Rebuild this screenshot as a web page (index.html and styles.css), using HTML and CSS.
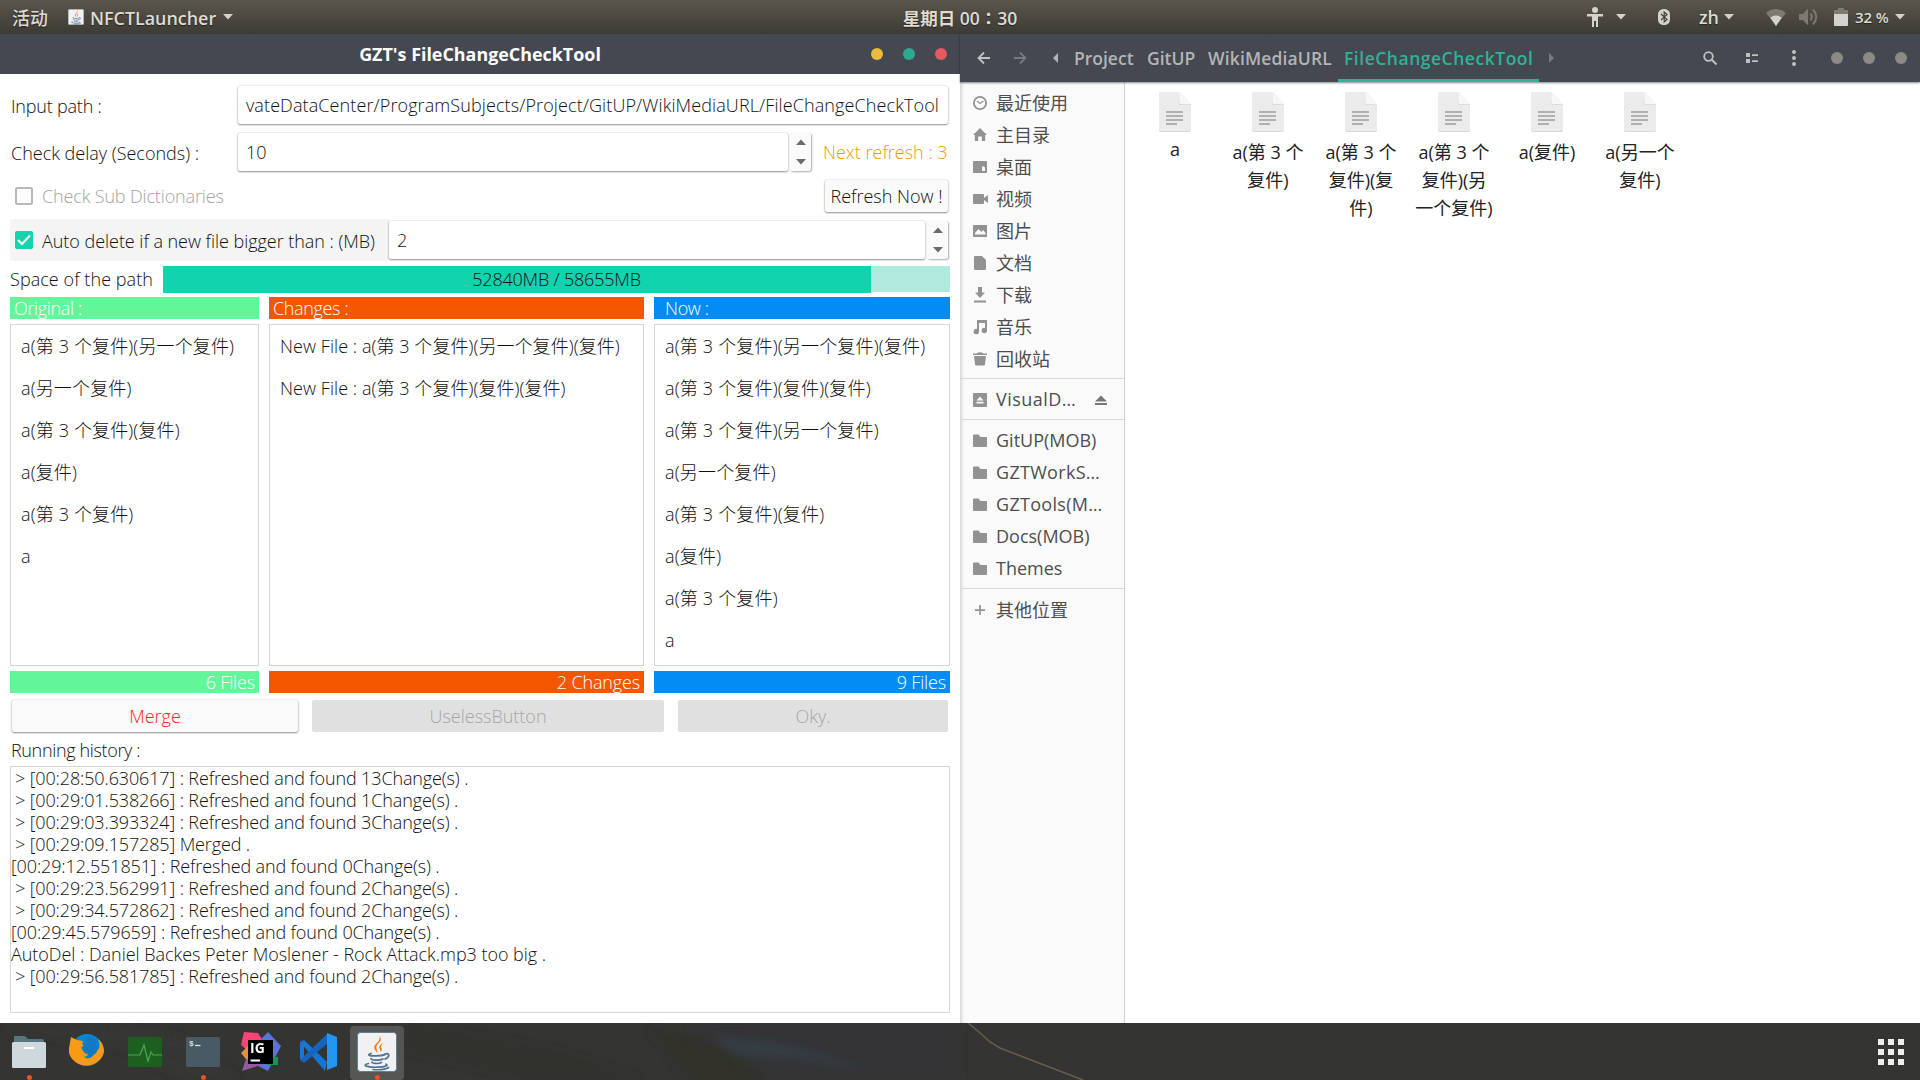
FILE: index.html
```html
<!DOCTYPE html>
<html lang="zh-CN">
<head>
<meta charset="utf-8">
<title>GZT's FileChangeCheckTool</title>
<link rel="stylesheet" href="styles.css">
</head>
<body>
<svg width="0" height="0" class="defs" aria-hidden="true">
  <symbol id="caret" viewBox="0 0 10 6"><path d="M0 0h10L5 5.5z"/></symbol>
  <symbol id="folder" viewBox="0 0 16 16"><path d="M1 2.5Q1 1.500 2 1.500H6.500L8.500 4H14Q15 4 15 5V13Q15 14 14 14H2Q1 14 1 13z"/></symbol>
  <symbol id="java" viewBox="0 0 40 40">
    <rect x=".5" y=".5" width="39" height="39" rx="3" fill="#f1f1f1" stroke="#5f7f98"/>
    <path d="M20.500 21c-2-3-5-5-2-8.500 2.500-2.800 5-4.500 4-8.500 3.500 4-.5 6.500-2.500 9-1.800 2.500.5 4.500.5 8zM23 20c1.500-2.200-1.500-3.500-.5-6 .8-1.700 2.500-2.400 4-3-3.500 3-2.500 4-1.800 5.500.6 1.500-.2 2.600-1.700 3.500z" fill="#ec7a1c"/>
    <g fill="none" stroke="#4d7393" stroke-width="1.700" stroke-linecap="round"><path d="M14 21.500c-5 1.800-1 2.300 5 2.300 4 0 7-.4 9-1.200"/><path d="M28 22c5-1.500 5 3 0 5"/><path d="M14 26.500c0 2 9 2.200 12 .5M15 30c0 1.700 6.500 2 9.500.5"/><path d="M11.500 31.500c-9 2.300 2 4 9.500 3.700 7-.2 11-1.700 8-3M16 37.500c7 .6 13-.2 15.500-2"/></g>
  </symbol>
  <symbol id="doc" viewBox="0 0 32 40">
    <path d="M2 0H21L32 12V38Q32 40 30 40H2Q0 40 0 38V2Q0 0 2 0z" fill="#ebebeb"/>
    <path d="M0 38Q0 40 2 40H30Q32 40 32 38V37Q32 39 30 39H2Q0 39 0 37z" fill="#d9d9d9"/>
    <path d="M20.500 0V10.500Q20.500 12 22 12.500H32V13H22Q20 13 20 11z" fill="#cfcfcf"/><path d="M20.500 0L32 12H22Q20.500 12 20.500 10.500z" fill="#f7f7f7"/>
    <path d="M7 19h17v2H7zM7 23h17v2H7zM7 27h17v2H7zM7 31h11v2H7z" fill="#b0b0b0"/>
  </symbol>
</svg>

<header class="topbar">
  <div class="topbar-left">
    <span class="activities">活动</span>
    <svg class="app-icon" viewBox="0 0 40 40"><use href="#java"/></svg>
    <span class="app-name">NFCTLauncher</span>
    <svg class="caret"><use href="#caret"/></svg>
  </div>
  <div class="clock">星期日 00<span class="colon" lang="zh-TW">：</span>30</div>
  <div class="tray">
    <svg class="tray-access" width="18" height="20" viewBox="0 0 18 20"><circle cx="9" cy="3" r="3"/><path d="M1 7h16v2.500h-5V20h-2v-6H8v6H6V9.500H1z"/></svg>
    <svg class="caret"><use href="#caret"/></svg>
    <svg class="tray-bt" width="12" height="16" viewBox="0 0 12 16"><rect width="12" height="16" rx="5.500"/><path d="M3 5l6 5.500L6.200 13V3L9 5.500 3 11" fill="none" stroke="#45433c" stroke-width="1.200"/></svg>
    <span class="lang">zh</span>
    <svg class="caret"><use href="#caret"/></svg>
    <svg class="tray-wifi" width="20" height="17" viewBox="0 0 20 17"><path d="M0 4Q10-4 20 4L10 17z" opacity=".35"/><path d="M4.300 8.500Q10 4.500 15.700 8.500L10 17z"/></svg>
    <svg class="tray-vol" width="20" height="18" viewBox="0 0 20 18"><path d="M0 6h4l5-5.500v17L4 12H0z"/><path d="M11.500 5.500Q14 9 11.500 12.500M14 1.500Q20.500 9 14 16.500" fill="none" stroke="#7b7972" stroke-width="2"/></svg>
    <svg class="tray-bat" width="14" height="18" viewBox="0 0 14 18"><path d="M4 0h6v2h3q1 0 1 1v4H0V3q0-1 1-1h3z" opacity=".35"/><path d="M0 6h14v11q0 1-1 1H1q-1 0-1-1z"/></svg>
    <span class="percent">32 %</span>
    <svg class="caret"><use href="#caret"/></svg>
  </div>
</header>

<main class="desktop">
  <section class="tool">
    <div class="tool-title">
      <h1>GZT's FileChangeCheckTool</h1>
      <div class="buttons"><i class="min"></i><i class="max"></i><i class="close"></i></div>
    </div>
    <div class="form">
      <div class="row row-path">
        <label>Input path :</label>
        <div class="input path">vateDataCenter/ProgramSubjects/Project/GitUP/WikiMediaURL/FileChangeCheckTool</div>
      </div>
      <div class="row row-delay">
        <label>Check delay (Seconds) :</label>
        <div class="input">10</div>
        <div class="spin"><svg class="caret up"><use href="#caret"/></svg><svg class="caret"><use href="#caret"/></svg></div>
        <span class="next">Next refresh : 3</span>
      </div>
      <div class="row row-sub">
        <span class="check"></span>
        <span class="muted">Check Sub Dictionaries</span>
        <button class="btn refresh">Refresh Now !</button>
      </div>
      <div class="row row-auto">
        <div class="auto">
          <span class="check on"><svg width="18" height="18" viewBox="0 0 18 18"><path d="M3 9l4 4 8-8.500" fill="none" stroke="#fff" stroke-width="2"/></svg></span>
          <span class="auto-text">Auto delete if a new file bigger than : (MB)</span>
        </div>
        <div class="input">2</div>
        <div class="spin"><svg class="caret up"><use href="#caret"/></svg><svg class="caret"><use href="#caret"/></svg></div>
      </div>
      <div class="row row-space">
        <label>Space of the path</label>
        <div class="meter"><div class="fill" style="width:708px"></div><span>52840MB / 58655MB</span></div>
      </div>
    </div>
    <div class="lists">
      <div class="list original">
        <div class="head">Original :</div>
        <ul><li>a(第 3 个复件)(另一个复件)</li><li>a(另一个复件)</li><li>a(第 3 个复件)(复件)</li><li>a(复件)</li><li>a(第 3 个复件)</li><li>a</li></ul>
        <div class="foot">6 Files</div>
      </div>
      <div class="list changes">
        <div class="head">Changes :</div>
        <ul><li>New File : a(第 3 个复件)(另一个复件)(复件)</li><li>New File : a(第 3 个复件)(复件)(复件)</li></ul>
        <div class="foot">2 Changes</div>
      </div>
      <div class="list now">
        <div class="head">Now :</div>
        <ul><li>a(第 3 个复件)(另一个复件)(复件)</li><li>a(第 3 个复件)(复件)(复件)</li><li>a(第 3 个复件)(另一个复件)</li><li>a(另一个复件)</li><li>a(第 3 个复件)(复件)</li><li>a(复件)</li><li>a(第 3 个复件)</li><li>a</li></ul>
        <div class="foot">9 Files</div>
      </div>
    </div>
    <div class="actions">
      <button class="btn merge">Merge</button>
      <button class="btn off useless">UselessButton</button>
      <button class="btn off oky">Oky.</button>
    </div>
    <div class="history-label">Running history :</div>
    <div class="history">
      <p class="mark">&gt; [00:28:50.630617] : Refreshed and found 13Change(s) .</p>
      <p class="mark">&gt; [00:29:01.538266] : Refreshed and found 1Change(s) .</p>
      <p class="mark">&gt; [00:29:03.393324] : Refreshed and found 3Change(s) .</p>
      <p class="mark">&gt; [00:29:09.157285] Merged .</p>
      <p>[00:29:12.551851] : Refreshed and found 0Change(s) .</p>
      <p class="mark">&gt; [00:29:23.562991] : Refreshed and found 2Change(s) .</p>
      <p class="mark">&gt; [00:29:34.572862] : Refreshed and found 2Change(s) .</p>
      <p>[00:29:45.579659] : Refreshed and found 0Change(s) .</p>
      <p class="plain">AutoDel : Daniel Backes Peter Moslener - Rock Attack.mp3 too big .</p>
      <p class="mark">&gt; [00:29:56.581785] : Refreshed and found 2Change(s) .</p>
    </div>
  </section>

  <section class="files">
    <div class="files-head">
      <svg class="back" width="14" height="14" viewBox="0 0 14 14"><path d="M13 7H2M7 1.500L1.500 7 7 12.500"/></svg>
      <svg class="fwd" width="14" height="14" viewBox="0 0 14 14"><path d="M1 7h11M7 1.500L12.500 7 7 12.500"/></svg>
      <svg class="tri-left" width="5" height="10" viewBox="0 0 5 10"><path d="M5 0v10L0 5z"/></svg>
      <nav class="crumbs"><a class="c1">Project</a><a class="c2">GitUP</a><a class="c3">WikiMediaURL</a><a class="current">FileChangeCheckTool</a></nav>
      <svg class="tri-right" width="5" height="10" viewBox="0 0 5 10"><path d="M0 0v10l5-5z"/></svg>
      <div class="tools">
        <svg width="14" height="14" viewBox="0 0 14 14"><circle cx="5.500" cy="5.500" r="4.300" fill="none" stroke="#bfc0c2" stroke-width="1.800"/><path d="M8.500 8.500l5 5" stroke="#bfc0c2" stroke-width="2"/></svg>
        <svg width="12" height="10" viewBox="0 0 12 10" fill="#bfc0c2"><path d="M0 0h4v4H0zM0 6h4v4H0zM6 1.200h6v1.800H6zM6 7.200h6v1.800H6z"/></svg>
        <svg width="4" height="16" viewBox="0 0 4 16" fill="#bfc0c2"><circle cx="2" cy="2" r="2"/><circle cx="2" cy="8" r="2"/><circle cx="2" cy="14" r="2"/></svg>
      </div>
      <div class="buttons"><i></i><i></i><i></i></div>
    </div>
    <div class="files-body">
      <aside class="places">
        <div class="place"><svg viewBox="0 0 16 16"><circle cx="8" cy="8" r="6.100" fill="none" stroke="#929292" stroke-width="1.800"/><path d="M5 6l3 2.500L11.500 6" fill="none" stroke="#929292" stroke-width="1.200"/></svg>最近使用</div>
        <div class="place"><svg viewBox="0 0 16 16"><path d="M8 1l7 7h-1.800v6H9.800V9.500H6.200V14H2.800V8H1z"/></svg>主目录</div>
        <div class="place"><svg viewBox="0 0 16 16"><path d="M2 2h12q1 0 1 1v10q0 1-1 1H2q-1 0-1-1V3q0-1 1-1zM10 7.500V12h3V8.500L12 7.500z" fill-rule="evenodd"/></svg>桌面</div>
        <div class="place"><svg viewBox="0 0 16 16"><path d="M2 3h9q1 0 1 1v3l4-3v8l-4-3v3q0 1-1 1H2q-1 0-1-1V4q0-1 1-1z"/></svg>视频</div>
        <div class="place"><svg viewBox="0 0 16 16"><path d="M2 2h12q1 0 1 1v10q0 1-1 1H2q-1 0-1-1V3q0-1 1-1zM3 11.500h10.500V10L11 7 9.500 9 6.500 6 3 10z" fill-rule="evenodd"/></svg>图片</div>
        <div class="place"><svg viewBox="0 0 16 16"><path d="M3 1h7l4 4v9q0 1-1 1H3q-1 0-1-1V2q0-1 1-1z"/></svg>文档</div>
        <div class="place"><svg viewBox="0 0 16 16"><path d="M6 0h4v5.500h3L8 11 3 5.500h3zM2 13.500h12v2H2z"/></svg>下载</div>
        <div class="place"><svg viewBox="0 0 16 16"><path d="M5 1h10v10.500a2.700 2.700 0 1 1-2-2.600V4H7v8.500A2.700 2.700 0 1 1 5 10z"/></svg>音乐</div>
        <div class="place"><svg viewBox="0 0 16 16"><path d="M1 2.500h3.500Q8 0 11.500 2.500H15V4H1zM2 5h12l-1 8.500q-.2 1-1.200 1H4.200q-1 0-1.200-1z"/></svg>回收站</div>
        <hr>
        <div class="place latin"><svg viewBox="0 0 16 16"><path d="M2 1h12q1 0 1 1v12q0 1-1 1H2q-1 0-1-1V2q0-1 1-1zM4.500 8.500h7L8 4.500zM4.500 9.800v1.700h7V9.800z" fill-rule="evenodd"/></svg><span class="visual">VisualD…</span><svg class="eject" viewBox="0 0 12 12"><path d="M0 7.500h12L6 1.500zM0 9h12v2H0z"/></svg></div>
        <hr>
        <div class="place latin"><svg viewBox="0 0 16 16"><use href="#folder"/></svg><span>GitUP(MOB)</span></div>
        <div class="place latin"><svg viewBox="0 0 16 16"><use href="#folder"/></svg><span class="cut">GZTWorkS…</span></div>
        <div class="place latin"><svg viewBox="0 0 16 16"><use href="#folder"/></svg><span class="cut">GZTools(M…</span></div>
        <div class="place latin"><svg viewBox="0 0 16 16"><use href="#folder"/></svg><span>Docs(MOB)</span></div>
        <div class="place latin"><svg viewBox="0 0 16 16"><use href="#folder"/></svg><span>Themes</span></div>
        <hr>
        <div class="place"><svg viewBox="0 0 16 16"><path d="M7.200 3h1.700v4.200H13v1.700H8.900V13H7.200V8.900H3V7.200h4.200z"/></svg>其他位置</div>
      </aside>
      <div class="grid">
        <figure class="single"><svg><use href="#doc"/></svg><figcaption>a</figcaption></figure>
        <figure><svg><use href="#doc"/></svg><figcaption>a(第 3 个<br>复件)</figcaption></figure>
        <figure><svg><use href="#doc"/></svg><figcaption>a(第 3 个<br>复件)(复<br>件)</figcaption></figure>
        <figure><svg><use href="#doc"/></svg><figcaption>a(第 3 个<br>复件)(另<br>一个复件)</figcaption></figure>
        <figure><svg><use href="#doc"/></svg><figcaption>a(复件)</figcaption></figure>
        <figure><svg><use href="#doc"/></svg><figcaption>a(另一个<br>复件)</figcaption></figure>
      </div>
    </div>
  </section>
</main>

<footer class="dock">
  <svg class="wallpaper" width="1920" height="57" viewBox="0 0 1920 57">
    <defs><filter id="soft"><feGaussianBlur stdDeviation="4"/></filter></defs>
    <g filter="url(#soft)"><path d="M680 0H960V57H780L725 20z" fill="#323637" opacity=".8"/><path d="M715 14L780 20 870 46 800 36 730 32z" fill="#343c43"/><path d="M650 5L720 22 770 57H690z" fill="#31302c"/><path d="M0 6L90 0 180 14 240 57H190L120 24z" fill="#383939" opacity=".6"/><path d="M400 0L560 30 640 57H540L400 25z" fill="#31302d"/></g>
    <path d="M968 0L979 9 990 19 1000 25 1083 57" fill="none" stroke="#665d4b" stroke-width="1.500"/>
  </svg>
  <div class="apps">
    <div class="app run"><svg width="40" height="40" viewBox="0 0 40 40"><path d="M5 4h11l3 3h14q2 0 2 2v8H5z" fill="#5a7482"/><rect x="3" y="10" width="34" height="26" rx="1.500" fill="#cfd8dd"/><path d="M15 16h10" stroke="#fff" stroke-width="2"/></svg></div>
    <div class="app"><svg width="40" height="40" viewBox="0 0 40 40"><circle cx="20" cy="18" r="16" fill="#0a84d0"/><path d="M4 5L2 16v5a18 17 0 0 0 35-1c0-6-2-10-6-13 2 4 2 8 0 11l-5-6 1 9c-1 5-6 7-10 4 3-1 4-2 5-3-4 0-6-2-7-5l4-3c-4 0-4-2-3-5l-6-1z" fill="#f79a16"/><path d="M21 4l8 4-1 4 4 3-3 6-5 4-4-3-1-3-5-3 5-5z" fill="#1479c0"/></svg></div>
    <div class="app"><svg width="40" height="40" viewBox="0 0 40 40"><rect x="3" y="5" width="34" height="30" rx="1.500" fill="#1d5f20"/><path d="M3 23h12l4-10 4 16 3-9 2 3h9" fill="none" stroke="#4ba650" stroke-width="1.200"/></svg></div>
    <div class="app run"><svg width="40" height="40" viewBox="0 0 40 40"><rect x="3" y="5" width="34" height="30" rx="1.500" fill="#485a64"/><path d="M12 13.500h5.500" stroke="#ddd" stroke-width="1.300"/><text x="6" y="14" class="prompt">$</text></svg></div>
    <div class="app"><svg width="40" height="40" viewBox="0 0 40 40"><path d="M3 0L17 1 24 12 13 24 0 13z" fill="#ff4278"/><path d="M27 0L40 14 27 39 17 34V10z" fill="#5c73d8"/><path d="M24 25h13v8H26z" fill="#0c9950"/><path d="M0 21l9-9v20z" fill="#e68e42"/><path d="M5 27l18 5L1 39z" fill="#965aa0"/><rect x="7" y="8" width="25" height="24"/><text x="9" y="21" class="ig">IG</text><path d="M9.500 28.500h9.500" stroke="#fff" stroke-width="2"/></svg></div>
    <div class="app"><svg width="40" height="40" viewBox="0 0 40 40"><path d="M1 10l4-2 23 22-2 9z" fill="#1677d2"/><path d="M1 28l4 3L29 11V1z" fill="#1565c0"/><path d="M1 10v18l4-3V13z" fill="#1976d2"/><path d="M28 1l10 4v29l-10 4z" fill="#2196f3"/></svg></div>
    <div class="app run active"><svg width="40" height="40" viewBox="0 0 40 40"><use href="#java"/></svg></div>
  </div>
  <svg class="show-apps" width="26" height="26" viewBox="0 0 26 26" fill="#eeeeec"><path d="M0 0h6v6H0zM10 0h6v6h-6zM20 0h6v6h-6zM0 10h6v6H0zM10 10h6v6h-6zM20 10h6v6h-6zM0 20h6v6H0zM10 20h6v6h-6zM20 20h6v6h-6z"/></svg>
</footer>
</body>
</html>
```
FILE: styles.css
```css
* { box-sizing: border-box; margin: 0; padding: 0; }
body {
  width: 1920px; height: 1080px; overflow: hidden;
  display: flex; flex-direction: column;
  font: 300 18px/24px "Open Sans", "Noto Sans CJK SC", sans-serif;
  color: #111; background: #343432;
}
svg { display: block; flex: none; }
.defs { display: none; }

/* top bar */
.topbar {
  height: 34px; flex: none;
  display: grid; grid-template-columns: 1fr auto 1fr; align-items: center;
  background: linear-gradient(#5a564d, #3d3b35);
  color: #dfdbd2; fill: #d4d2cd;
  font-size: 17.900px; font-weight: 600; text-shadow: 0 1px 1px #222;
}
.caret { width: 10px; height: 6px; }
.topbar-left, .tray { display: flex; align-items: center; }
.topbar-left { padding-left: 12px; }
.activities { width: 56px; font-weight: 500; padding-top: 1px; }
.app-icon { width: 16px; height: 16px; }
.app-name { margin: 0 5px 0 6px; width: 128px; padding-top: 1px; }
.clock { font-weight: 600; font-size: 17.500px; white-space: nowrap; padding-top: 2px; }
.colon { font-family: "Noto Sans CJK TC", sans-serif; }
.tray { justify-content: flex-end; padding-right: 15px; }
.tray-access { margin-right: 12px; }
.tray-bt { margin: 0 29px 0 32px; }
.lang { width: 18px; margin-right: 7px; }
.tray-wifi { margin-left: 32px; }
.tray-vol { margin: 0 15px 0 13px; fill: #7b7972; }
.tray-bat { margin-right: 7px; }
.percent { font-size: 15px; width: 35px; margin-right: 5px; white-space: nowrap; letter-spacing: -.1px; }

.desktop { display: flex; height: 989px; flex: none; }

/* tool window */
.tool { width: 960px; display: flex; flex-direction: column; background: #fff; }
.tool-title {
  height: 40px; background: #444850; color: #fff;
  display: grid; grid-template-columns: 1fr auto 1fr; align-items: center;
}
.tool-title h1 { grid-column: 2; font-size: 17.900px; font-weight: 700; }
.buttons { display: flex; gap: 20px; justify-content: flex-end; }
.tool-title .buttons { padding-right: 13px; }
.buttons i { width: 12px; height: 12px; border-radius: 50%; background: #8b8a87; }
.buttons .min { background: #eabb3c; }
.buttons .max { background: #2fa98f; }
.buttons .close { background: #e7595f; }

.form { padding: 12px 10px 0; display: flex; flex-direction: column; }
.row { display: flex; align-items: center; white-space: nowrap; }
.row-path { height: 38px; }
.row-delay { height: 38px; margin-top: 9px; }
.row-path label, .row-delay label { width: 228px; padding: 1px 0 0 1px; }
.row-path label { letter-spacing: -.2px; }
.input {
  height: 38px; flex: 1; margin-right: 2px; padding: 7px 8px;
  border-radius: 2px; background: #fff;
  box-shadow: 0 1px 2px #0006, 0 0 2px #0003;
}
.path { letter-spacing: .1px; }
.spin {
  width: 21px; height: 38px; margin-right: 2px; border-radius: 2px; background: #fafafa; fill: #6b6b6b;
  display: flex; flex-direction: column; align-items: center; justify-content: space-between;
  padding: 6px 0; box-shadow: 1px 1px 2px #0005;
}
.up { transform: rotate(180deg); }
.next { width: 127px; margin-left: 10px; color: #eb9c00; }
.row-sub { height: 48px; margin-top: 1px; padding: 0 2px 0 5px; }
.check { width: 18px; height: 18px; flex: none; border: 2px solid #b7b7b7; border-radius: 2px; margin-right: 9px; }
.check.on { border: 0; background: #11d3ae; }
.muted { color: #a3a3a3; letter-spacing: -.15px; }
.btn { font: inherit; height: 32px; border: 0; border-radius: 2px; background: #fafafa; box-shadow: 0 1px 2px #0006, 0 0 2px #0003; }
.refresh { width: 123px; margin-left: auto; color: #111; }
.row-auto { height: 42px; margin-top: -1px; }
.auto { display: flex; align-items: center; width: 379px; height: 42px; padding-left: 5px; background: #f4f4f4; }
.auto-text { padding-top: 1px; letter-spacing: -.04px; }
.row-space { height: 26px; margin-top: 5px; justify-content: space-between; }
.row-space label { letter-spacing: .06px; }
.meter { display: grid; width: 787px; height: 26px; background: #b0e9dd; }
.meter > * { grid-area: 1 / 1; }
.fill { background: #11d3ae; }
.meter span { text-align: center; line-height: 27px; letter-spacing: -.2px; }

.lists { display: grid; grid-template-columns: 249px 375px 296px; gap: 10px; padding: 5px 10px 0; }
.head, .foot { height: 22px; line-height: 23px; color: #fff; padding: 0 4px; }
.head { letter-spacing: -.35px; }
.foot { text-align: right; letter-spacing: -.15px; }
.original .head, .original .foot { background: #63f59a; }
.changes .head, .changes .foot { background: #f55600; }
.now .head, .now .foot { background: #038cf4; }
.now .head { padding-left: 11px; }
.list ul { list-style: none; height: 342px; margin: 5px 0; border: 1px solid #d6d6d6; padding-left: 10px; }
.list li { height: 42px; line-height: 43px; white-space: nowrap; letter-spacing: .14px; }
.changes li { letter-spacing: .06px; }
.now li { letter-spacing: .18px; }

.actions { display: flex; padding: 7px 12px 0; height: 39px; }
.merge { width: 286px; color: #ff2323; margin-right: 14px; }
.off { background: #e0e0e0; color: #a6a6a6; box-shadow: none; }
.useless { width: 352px; margin-right: 14px; }
.oky { width: 270px; }
.history-label { height: 34px; line-height: 37px; padding-left: 11px; letter-spacing: -.35px; }
.history { height: 247px; margin: 0 10px; border: 1px solid #d6d6d6; line-height: 23px; white-space: nowrap; letter-spacing: -.13px; }
.history p { height: 22px; }
.history .mark { padding-left: 4px; }
.history .plain { letter-spacing: -.04px; }

/* file manager */
.files { width: 960px; display: flex; flex-direction: column; background: #fff; }
.files-head {
  height: 48px; flex: none; display: flex; align-items: center;
  padding: 0 13px 0 17px; background: #444850; color: #b3b4b7;
  box-shadow: 0 1px 2px #0007; position: relative;
}
.back { fill: none; stroke: #c1c2c4; stroke-width: 1.800; }
.fwd { fill: none; stroke: #777a80; stroke-width: 1.800; margin: 0 26px 0 22px; }
.tri-left { fill: #b3b4b7; }
.tri-right { fill: #777a80; margin-left: 10px; }
.crumbs { display: flex; height: 48px; margin-left: 16px; font-weight: 600; font-size: 17.500px; line-height: 49px; white-space: nowrap; }
.c1 { width: 73px; }
.c2 { width: 61px; }
.c3 { width: 130px; letter-spacing: .15px; }
.current { width: 201px; padding-left: 6px; color: #2eb398; border-bottom: 3px solid #2eb398; letter-spacing: .52px; }
.tools { display: flex; align-items: center; gap: 36px; margin-left: auto; margin-right: 35px; }
.tools svg:first-child { margin-right: -7px; }
.tools svg:nth-child(2) { margin-right: -2px; }
.files-body { flex: 1; display: flex; }
.places { width: 165px; padding-top: 5px; border-right: 1px solid #cfcfcf; background: #fafafa; box-shadow: inset 4px 0 4px -3px #0003; font-weight: 400; color: #4e4e4e; fill: #929292; }
.place { height: 32px; display: flex; align-items: center; padding-left: 12px; white-space: nowrap; }
.place > svg:first-child { width: 16px; height: 16px; margin-right: 8px; }
.place.latin span { padding-bottom: 2px; }
.visual { width: 99px; letter-spacing: .45px; }
.cut { letter-spacing: .3px; }
.eject { width: 12px; height: 12px; fill: #777; }
.places hr { border: 0; height: 1px; background: #d9d9d9; margin: 3px 0 5px; }
.grid { display: flex; padding: 10px 0 0 3.500px; font-weight: 400; color: #222; }
.grid figure { width: 93px; display: flex; flex-direction: column; align-items: center; }
.grid svg { width: 32px; height: 40px; }
.grid figcaption { margin-top: 6px; line-height: 28px; text-align: center; white-space: nowrap; }
.grid .single figcaption { line-height: 22px; }

/* dock */
.dock { height: 57px; flex: none; display: flex; align-items: center; justify-content: space-between; position: relative; background: #343432; }
.wallpaper { position: absolute; left: 0; top: 0; }
.apps { display: flex; gap: 4px; padding-left: 2px; position: relative; }
.app { width: 54px; height: 54px; margin-top: 2px; padding: 6px 7px; border-radius: 4px; position: relative; }
.app svg { overflow: visible; }
.active { background: #ffffff2b; }
.run::after { content: ""; position: absolute; left: 25px; bottom: 0; width: 5px; height: 5px; border-radius: 50%; background: #e95420; }
.prompt { font: 700 8px "Liberation Mono", monospace; fill: #ddd; }
.ig { font: 700 14px "Open Sans", sans-serif; fill: #fff; }
.show-apps { margin: 1px 16px 0 0; position: relative; }
```
